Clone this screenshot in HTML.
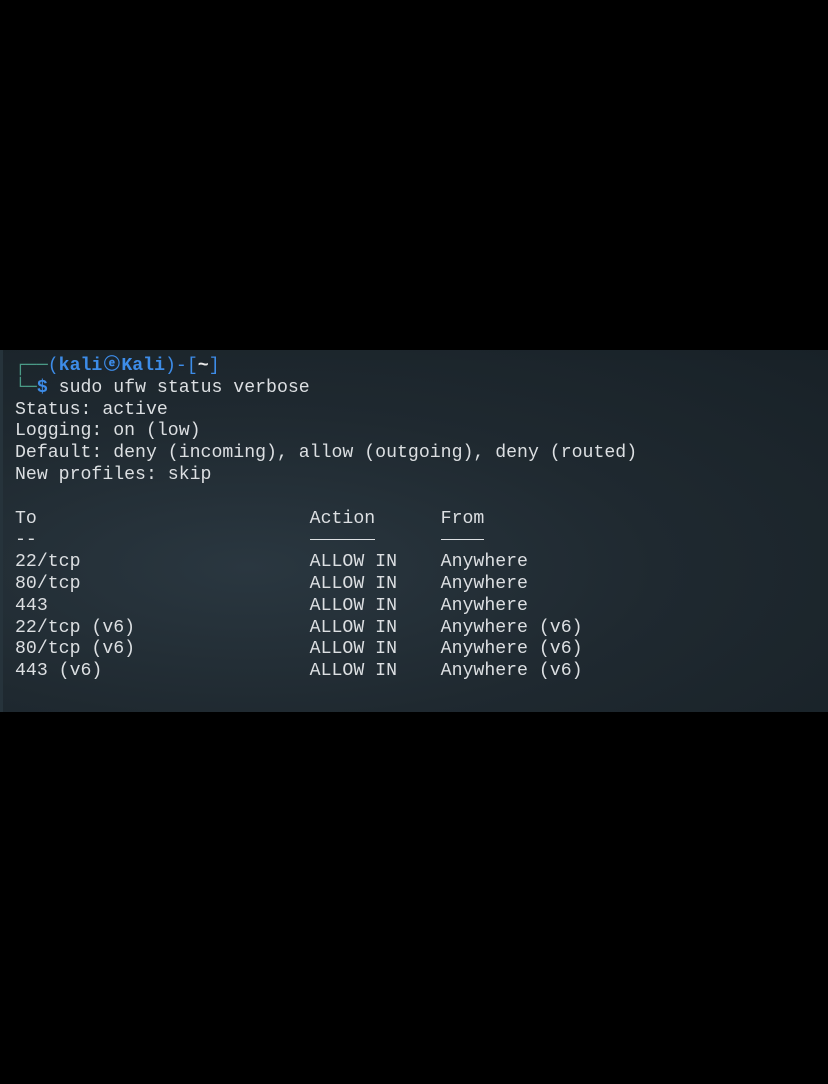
<!DOCTYPE html>
<html><head><style>
html,body{margin:0;padding:0;background:#000;width:828px;height:1084px;overflow:hidden}
.term{position:absolute;left:0;top:350px;width:828px;height:362px;
background:radial-gradient(ellipse at 30% 60%,#2a3740 0%,#1f2930 50%,#182127 100%);}
.term:before{content:"";position:absolute;left:0;top:0;width:3px;height:362px;background:#26333b}
pre{position:absolute;left:15px;top:355px;margin:0;font-family:"Liberation Mono","DejaVu Sans Mono",monospace;
font-size:18.2px;line-height:21.8px;color:#dcdfe2;letter-spacing:0}
.g{color:#4a9a86}.b{color:#3d8ce8;font-weight:bold}.p{color:#3d8ce8}
.at{display:inline-block;width:19px;text-align:center;font-size:16px;vertical-align:1px}
.u{display:inline-block;border-bottom:1.5px solid #dcdfe2;color:transparent;line-height:14px;position:relative;top:-8px}
</style></head><body>
<div class="term"></div>
<pre><span class="g">┌──</span><span class="p">(</span><span class="b">kali<span class="at">ⓔ</span>Kali</span><span class="p">)-[</span><span style="color:#e8e8e8;font-weight:bold">~</span><span class="p">]</span>
<span class="g">└─</span><span class="b">$</span> sudo ufw status verbose
Status: active
Logging: on (low)
Default: deny (incoming), allow (outgoing), deny (routed)
New profiles: skip

To                         Action      From
--                         <span class="u">------</span>      <span class="u">----</span>
22/tcp                     ALLOW IN    Anywhere
80/tcp                     ALLOW IN    Anywhere
443                        ALLOW IN    Anywhere
22/tcp (v6)                ALLOW IN    Anywhere (v6)
80/tcp (v6)                ALLOW IN    Anywhere (v6)
443 (v6)                   ALLOW IN    Anywhere (v6)</pre>
</body></html>
